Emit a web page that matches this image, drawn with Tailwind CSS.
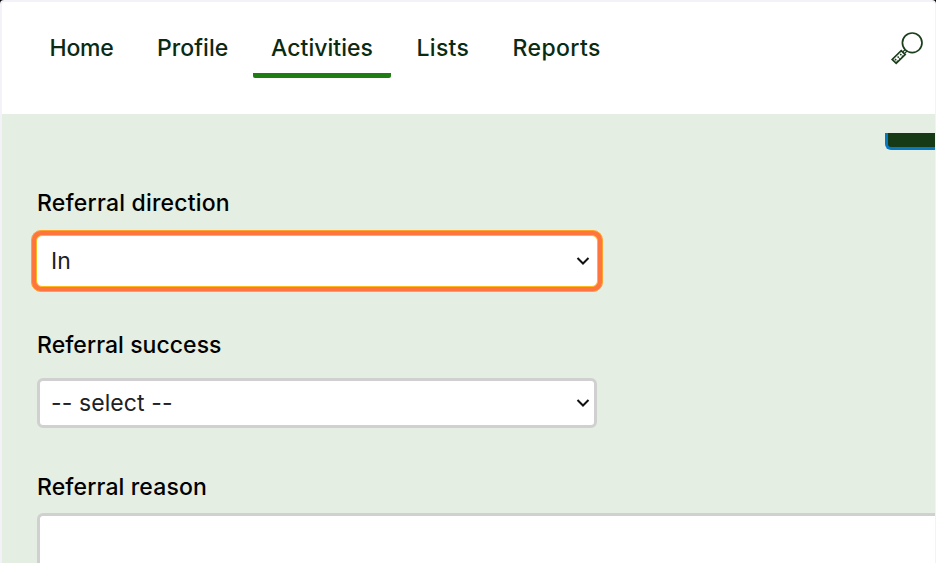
<!DOCTYPE html>
<html lang="en">
<head>
<meta charset="utf-8">
<title>Referral</title>
<script src="https://cdn.jsdelivr.net/npm/@tailwindcss/browser@4"></script>
</head>
<body class="w-[936px] h-[563px] overflow-hidden bg-black font-['Inter',sans-serif] text-[23px] leading-7">
<div class="w-full h-[570px] rounded-t-[4px] overflow-hidden border-t-2 border-l-2 border-r border-[#f3f2f8] bg-[#e4eee3] flex flex-col">
  <header class="h-28 shrink-0 bg-white flex justify-between pl-[29px] pr-[10px]">
    <nav class="flex gap-2 pt-8 font-medium text-[#0b2a12] whitespace-nowrap">
      <a class="w-[100px] h-[44px] pl-[18.5px] tracking-[-0.2px]"><span>Home</span></a>
      <a class="w-[106px] h-[44px] pl-[18px] tracking-[0.05px]"><span>Profile</span></a>
      <a class="w-[138px] h-[43.500px] pl-[18px] border-b-[5px] border-[#1f7d14] rounded-b-[2px] tracking-[0.05px]"><span>Activities</span></a>
      <a class="w-[88px] h-[44px] pl-[17.5px] tracking-[0.3px]"><span>Lists</span></a>
      <a class="w-[124px] h-[44px] pl-[17.5px] tracking-[0.4px]"><span>Reports</span></a>
    </nav>
    <svg class="mt-[29px] w-[35px] h-[35px]" viewBox="0 0 35 35" fill="none" stroke="#1b3f1c" stroke-width="1.7">
      <circle cx="22.200" cy="11.8" r="9.8"/>
      <path d="M15.2 18.5l-2.6 2.6M17 20l-2.6 2.6" stroke-width="1.2"/>
      <path d="M11.2 19.6L15.2 23.6L6.2 32.4L2.2 28.4Z"/>
      <path d="M5 28l2.600 2.600M7.600 25.500l2.600 2.600M10.200 23l2.600 2.600" stroke-width="1.5" stroke-dasharray="1.700 0.800"/>
    </svg>
  </header>
  <main class="flex flex-col pl-[35px] text-black">
    <div class="mt-[19px] h-[17px] w-[50px] self-end bg-[#173a16] border-l-[3px] border-b-[3px] border-[#0879bf] rounded-bl-[6px]"></div>
    <label class="mt-[39px] h-7 font-medium tracking-[0.2px]"><span>Referral direction</span></label>
    <div class="-ml-[6px] mt-[13px] w-[572px] h-[62px] rounded-[10px] border border-[#ffa32c] bg-[#ff7540] p-1">
      <div class="w-full h-full rounded-[6px] border border-[#ffb91c] bg-white flex items-center justify-between pl-[14px] pr-[7px] text-[#202124]">
        <span class="tracking-[0.1px]">In</span>
        <svg class="w-[14px] h-[10px]" viewBox="0 0 14 10" fill="none" stroke="#111" stroke-width="2"><path d="M1.5 2L7 7.5L12.500 2"/></svg>
      </div>
    </div>
    <label class="mt-[39px] h-7 font-medium tracking-[0.05px]"><span>Referral success</span></label>
    <div class="mt-[19px] w-[560px] h-[50px] rounded-[6px] border-[3px] border-[#d0d0d0] bg-white flex items-center justify-between pl-[11px] pr-[4px] text-[#202124]">
      <span class="tracking-[0.1px]">-- select --</span>
      <svg class="w-[14px] h-[10px]" viewBox="0 0 14 10" fill="none" stroke="#111" stroke-width="2"><path d="M1.5 2L7 7.5L12.500 2"/></svg>
    </div>
    <label class="mt-[45px] h-7 font-medium tracking-[0.12px]"><span>Referral reason</span></label>
    <div class="mt-[12px] h-[60px] rounded-tl-[6px] border-t-[3px] border-l-[3px] border-[#d0d0d0] bg-white"></div>
  </main>
</div>
</body>
</html>
